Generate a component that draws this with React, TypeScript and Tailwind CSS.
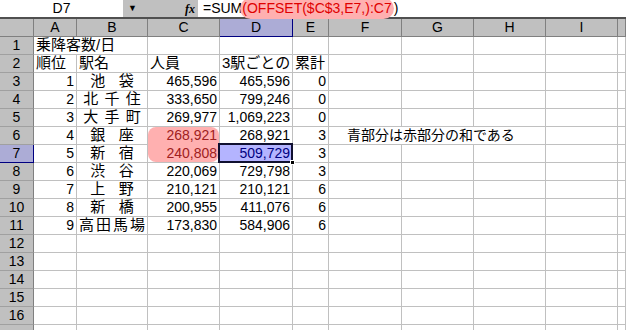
const ROWS = [
  { rank: '1', name: ['池', '袋'], c: '465,596', d: '465,596', e: '0' },
  { rank: '2', name: ['北', '千', '住'], c: '333,650', d: '799,246', e: '0' },
  { rank: '3', name: ['大', '手', '町'], c: '269,977', d: '1,069,223', e: '0' },
  { rank: '4', name: ['銀', '座'], c: '268,921', d: '268,921', e: '3' },
  { rank: '5', name: ['新', '宿'], c: '240,808', d: '509,729', e: '3' },
  { rank: '6', name: ['渋', '谷'], c: '220,069', d: '729,798', e: '3' },
  { rank: '7', name: ['上', '野'], c: '210,121', d: '210,121', e: '6' },
  { rank: '8', name: ['新', '橋'], c: '200,955', d: '411,076', e: '6' },
  { rank: '9', name: ['高', '田', '馬', '場'], c: '173,830', d: '584,906', e: '6' },
];

const COLS = ['A', 'B', 'C', 'D', 'E', 'F', 'G', 'H', 'I', ''];

const cell = 'h-[18px] border-r border-b border-[#c0c0c0] flex items-end pb-[2px] leading-[14px] whitespace-nowrap overflow-visible';
const num = 'justify-end pr-[2px] text-[14px]';
const jp = 'text-[15px] pl-[2px]';

function RowHead({ n, active }: { n?: number; active?: boolean }) {
  return (
    <div
      className={`h-[18px] flex items-center justify-center text-[14px] border-b border-r ${
        active ? 'bg-[#acacd6] border-r-[#000080] border-b-[#000080]' : 'bg-[#c0c0c0] border-b-[#a0a0a0] border-r-[#808080]'
      }`}
    >
      {n}
    </div>
  );
}

function Empty({ count }: { count: number }) {
  return (
    <>
      {Array.from({ length: count }).map((_, i) => (
        <div key={i} className={cell}></div>
      ))}
    </>
  );
}

export default function App() {
  return (
    <div className="w-[626px] h-[330px] overflow-hidden bg-white text-black font-['Liberation_Sans','Noto_Sans_CJK_JP',sans-serif]">
      {/* Formula bar */}
      <div className="flex h-[19px] border-b-2 border-[#505050] text-[14px]">
        <div className="w-[123px] flex items-center justify-center">D7</div>
        <div className="w-[75px] bg-[#c0c0c0] flex items-center justify-between pl-[5px] pr-[3px]">
          <span className="text-[9px] leading-none text-black">▼</span>
          <span className="italic font-bold text-[12px] font-['Liberation_Serif',serif]">fx</span>
        </div>
        <div className="flex-1 flex items-center pl-[5px]">
          <span>=SUM</span>
          <span className="bg-[#ffb0b0] text-[#e00000] rounded-full px-[2px] -ml-[2px]">(OFFSET($C$3,E7,):C7</span>
          <span>)</span>
        </div>
      </div>

      {/* Sheet */}
      <div className="grid grid-cols-[34px_43px_71px_72px_73px_36px_73px_72px_72px_72px_1fr]">
        {/* column headers */}
        <div className="h-[18px] bg-[#c0c0c0] border-r border-b border-[#808080]"></div>
        {COLS.map((c) => (
          <div
            key={c}
            className={`h-[18px] flex items-center justify-center text-[14px] border-r border-b ${
              c === 'D' ? 'bg-[#acacd6] border-[#000080]' : 'bg-[#c0c0c0] border-[#808080]'
            }`}
          >
            {c}
          </div>
        ))}

        {/* row 1 */}
        <RowHead n={1} />
        <div className={`${cell} ${jp} col-span-2`}>乗降客数/日</div>
        <Empty count={8} />

        {/* row 2 */}
        <RowHead n={2} />
        <div className={`${cell} ${jp}`}>順位</div>
        <div className={`${cell} ${jp}`}>駅名</div>
        <div className={`${cell} ${jp}`}>人員</div>
        <div className={`${cell} ${jp}`}>3駅ごとの</div>
        <div className={`${cell} ${jp}`}>累計</div>
        <Empty count={5} />

        {ROWS.map((r, i) => {
          const n = i + 3;
          const red = n === 6 || n === 7;
          const sel = n === 7;
          return (
            <div key={n} className="contents">
              <RowHead n={n} active={sel} />
              <div className={`${cell} ${num}`}>{r.rank}</div>
              <div className={`${cell} text-[15px] justify-evenly`}>
                {r.name.map((ch, k) => (
                  <span key={k}>{ch}</span>
                ))}
              </div>
              {red ? (
                <div className={`h-[18px] border-r border-[#c0c0c0] ${n === 6 ? 'border-b border-b-[#ffb0b0]' : 'border-b'}`}>
                  <div
                    className={`h-full bg-[#ffb0b0] text-[#a02020] flex items-end justify-end pr-[2px] pb-[2px] leading-[14px] text-[14px] ${
                      n === 6 ? 'rounded-t-[8px]' : 'rounded-b-[8px] h-[17px]'
                    }`}
                  >
                    {r.c}
                  </div>
                </div>
              ) : (
                <div className={`${cell} ${num}`}>{r.c}</div>
              )}
              {sel ? (
                <div className={`${cell} ${num} relative bg-[#b4b4ff] text-[#000080]`}>
                  <div className="absolute -left-[2px] -top-[2px] w-[75px] h-[20px] border-2 border-[#101030]"></div>
                  <div className="absolute -right-[3px] -bottom-[3px] w-[5px] h-[5px] bg-black border border-white"></div>
                  <span className="relative">{r.d}</span>
                </div>
              ) : (
                <div className={`${cell} ${num}`}>{r.d}</div>
              )}
              <div className={`${cell} ${num}`}>{r.e}</div>
              {n === 6 ? (
                <>
                  <div className={`${cell} text-[14px] pl-[18px] col-span-3`}>青部分は赤部分の和である</div>
                  <Empty count={2} />
                </>
              ) : (
                <Empty count={5} />
              )}
            </div>
          );
        })}

        {[12, 13, 14, 15, 16].map((n) => (
          <div key={n} className="contents">
            <RowHead n={n} />
            <Empty count={10} />
          </div>
        ))}
        <RowHead />
        <Empty count={10} />
      </div>
    </div>
  );
}
